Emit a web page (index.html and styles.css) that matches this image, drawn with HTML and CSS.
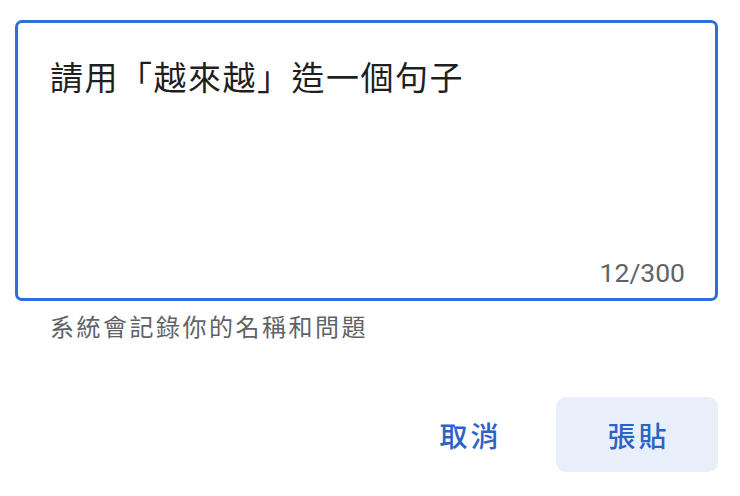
FILE: index.html
```html
<!DOCTYPE html>
<html lang="zh-Hant">
<head>
<meta charset="utf-8">
<title>提問</title>
<link rel="stylesheet" href="styles.css">
</head>
<body>
<div class="dialog">
  <div class="field">
    <div class="input">請用「越來越」造一個句子</div>
    <div class="counter">12/300</div>
  </div>
  <div class="helper">系統會記錄你的名稱和問題</div>
  <div class="actions">
    <button class="btn btn-text">取消</button>
    <button class="btn btn-tonal">張貼</button>
  </div>
</div>
</body>
</html>
```

FILE: styles.css
```css
* { box-sizing: border-box; }
html, body {
  margin: 0;
  padding: 0;
  background: #ffffff;
}
body {
  font-family: "Noto Sans CJK TC", "Noto Sans", Roboto, sans-serif;
}
.dialog {
  width: 740px;
  padding: 20px 22px 0 15px;
  display: flex;
  flex-direction: column;
}
.field {
  height: 281px;
  border: 3px solid #2b6fdb;
  border-radius: 7px;
  padding: 31px 32px 10px 32px;
  display: flex;
  flex-direction: column;
}
.input {
  flex: 1;
  font-size: 33px;
  line-height: 44px;
  letter-spacing: 1.5px;
  color: #1f1f1f;
}
.counter {
  align-self: flex-end;
  font-family: Roboto, "Noto Sans", sans-serif;
  font-size: 26.5px;
  line-height: 30px;
  color: #5f6368;
  margin-right: -2px;
}
.helper {
  margin-top: 10px;
  padding-left: 35px;
  font-size: 24px;
  line-height: 30px;
  letter-spacing: 2.5px;
  color: #5f6368;
}
.actions {
  display: flex;
  justify-content: flex-end;
  gap: 6px;
  margin-top: 56px;
}
.btn {
  width: 162px;
  height: 75px;
  border: none;
  border-radius: 10px;
  font-family: "Noto Sans CJK TC", sans-serif;
  font-size: 28px;
  font-weight: 500;
  letter-spacing: 3px;
  color: #2c63c6;
  background: transparent;
  padding: 0 0 0 3px;
}
.btn-tonal {
  background: #e8effb;
}
```
